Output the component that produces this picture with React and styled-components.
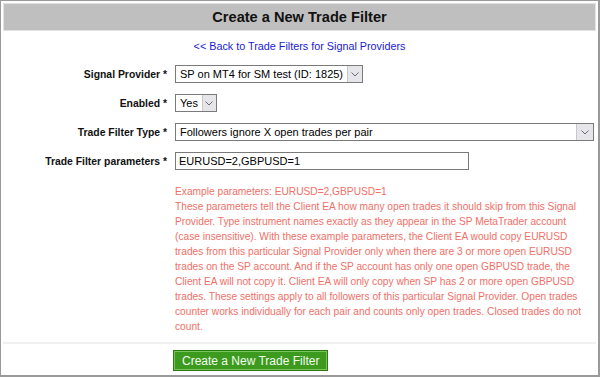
import React from 'react';
import styled, { createGlobalStyle } from 'styled-components';

const GlobalStyle = createGlobalStyle`
  html, body { margin: 0; padding: 0; background: #fff; }
  body { font-family: "Liberation Sans", Arial, sans-serif; font-size: 10.5px; color: #000; }
`;

const Frame = styled.div`
  box-sizing: border-box;
  width: 600px; height: 377px;
  border: 1px solid #9a9a9a; border-width: 1px 2px 2px 1px;
  padding: 2px;
  display: flex; flex-direction: column;
`;

const Header = styled.div`
  height: 26px;
  background: #bfbfbf;
  border: 1px solid #e2e2e2;
  display: flex; align-items: center; justify-content: center;
  font-size: 14.6px; font-weight: bold; color: #111;
`;

const BackLink = styled.a`
  display: block; text-align: center;
  margin-top: 9px;
  font-size: 10.8px;
  color: #1a1ad8; text-decoration: none;
`;

const Form = styled.div`
  display: grid;
  grid-template-columns: 164px 1fr;
  column-gap: 8px;
  row-gap: 11px;
  margin-top: 13px;
  padding-right: 5px;
`;

const Label = styled.label`
  text-align: right; font-weight: bold; font-size: 10.4px;
  align-self: center;
  color: #111;
`;

const Field = styled.div`
  display: flex; align-items: center;
`;

const Select = styled.div`
  box-sizing: border-box;
  display: flex; align-items: stretch;
  height: 18px;
  width: ${p => p.$w || 'auto'};
  border: 1px solid #7a7a7a;
  background: #fff;
  font-size: 11px;
`;

const SelectText = styled.span`
  flex: 1; padding: 0 4px;
  display: flex; align-items: center;
  white-space: nowrap;
`;

const Arrow = styled.span`
  width: 16px;
  background: #e6e6ea;
  border-left: 1px solid #c8c8c8;
  display: flex; align-items: center; justify-content: center;
`;

const Input = styled.div`
  box-sizing: border-box;
  width: 294px; height: 18px;
  border: 1px solid #7a7a7a;
  padding: 0 3px;
  font-size: 11px;
  display: flex; align-items: center;
`;

const Help = styled.p`
  grid-column: 2;
  max-width: 410px;
  margin: 3px 0 0;
  font-size: 10.2px;
  color: #f07068;
  line-height: 15px;
`;

const Divider = styled.hr`
  border: 0; border-top: 2px solid #f0f0f0;
  margin: 8px 0 0;
`;

const ButtonRow = styled.div`
  padding-left: 170px;
  margin-top: 6px;
`;

const Button = styled.button`
  font-family: inherit; font-size: 12px;
  height: 21px; padding: 0 8px;
  background: #3c9a1e;
  color: #f2faee;
  border: 1px solid #2a7a10;
  outline: 1px solid #7cc35a; outline-offset: -2px;
`;

const Chevron = () => (
  <svg width="8" height="5" viewBox="0 0 8 5">
    <path d="M0.5 0.5 L4 4 L7.5 0.5" fill="none" stroke="#6a6a7a" strokeWidth="1" />
  </svg>
);

const Dropdown = ({ w, children }) => (
  <Select $w={w}>
    <SelectText>{children}</SelectText>
    <Arrow><Chevron /></Arrow>
  </Select>
);

export default function App() {
  return (
    <>
      <GlobalStyle />
      <Frame>
        <Header>Create a New Trade Filter</Header>
        <BackLink href="#">&lt;&lt; Back to Trade Filters for Signal Providers</BackLink>
        <Form>
          <Label>Signal Provider *</Label>
          <Field><Dropdown w="188px">SP on MT4 for SM test (ID: 1825)</Dropdown></Field>
          <Label>Enabled *</Label>
          <Field><Dropdown w="42px">Yes</Dropdown></Field>
          <Label>Trade Filter Type *</Label>
          <Field><Dropdown w="419px">Followers ignore X open trades per pair</Dropdown></Field>
          <Label>Trade Filter parameters *</Label>
          <Field><Input>EURUSD=2,GBPUSD=1</Input></Field>
          <Help>
            Example parameters: EURUSD=2,GBPUSD=1<br />
            These parameters tell the Client EA how many open trades it should skip from this Signal Provider. Type instrument names exactly as they appear in the SP MetaTrader account (case insensitive). With these example parameters, the Client EA would copy EURUSD trades from this particular Signal Provider only when there are 3 or more open EURUSD trades on the SP account. And if the SP account has only one open GBPUSD trade, the Client EA will not copy it. Client EA will only copy when SP has 2 or more open GBPUSD trades. These settings apply to all followers of this particular Signal Provider. Open trades counter works individually for each pair and counts only open trades. Closed trades do not count.
          </Help>
        </Form>
        <Divider />
        <ButtonRow><Button>Create a New Trade Filter</Button></ButtonRow>
      </Frame>
    </>
  );
}
